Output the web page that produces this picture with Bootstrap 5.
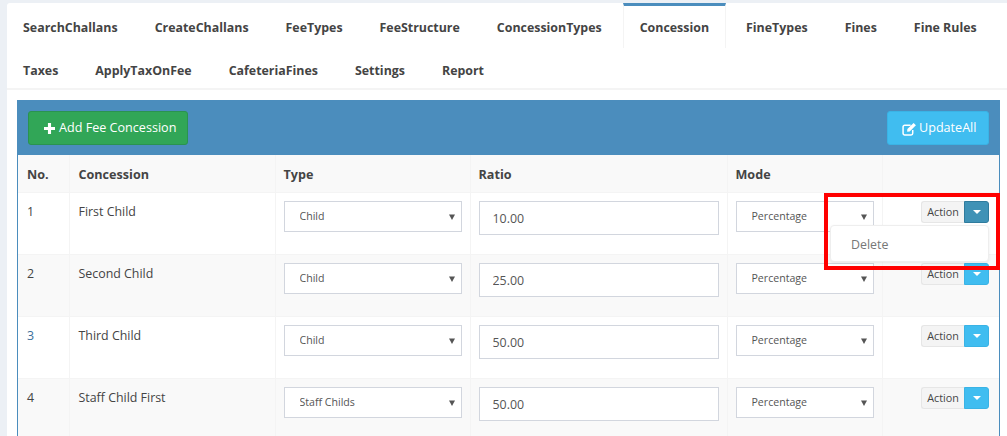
<!DOCTYPE html>
<html lang="en"><head><meta charset="utf-8"><title>Concession</title>
<link href="https://cdn.jsdelivr.net/npm/bootstrap@5.3.0/dist/css/bootstrap.min.css" rel="stylesheet">
<style>
html,body{height:436px;overflow:hidden}
body{background:#ecf0f5;font-family:"Open Sans","Noto Sans",sans-serif;font-size:13px;color:#333;padding:3px 0 0 7px;position:relative}
.tabbox{background:#fff;border-radius:3px 0 0 0;height:433px;padding-bottom:0;overflow:hidden}
.tabrow{display:flex;flex-wrap:wrap;height:87px;border-bottom:2px solid #f4f4f4;align-content:flex-start;margin:0;padding:0;list-style:none}
.tabrow li{height:43px}
.tabrow a{display:block;height:42px;padding:13px 16px 0;margin:3px 5px 0 0;font-weight:700;color:#444;text-decoration:none;font-size:12.4px;line-height:18px;white-space:nowrap}
.tabrow li.on a{height:45px;margin:0 4px 0 0;border-top:3px solid #4b8dbd;border-left:1px solid #f4f4f4;border-right:1px solid #f4f4f4;padding:13px 16px 0;background:#fff}
.tabrow li.second a{height:42px}
.panelbox{margin:10px 0 0 10px;width:983px;border:1px solid #4b8dbd;border-bottom:0;border-radius:4px 4px 0 0;position:relative;height:400px}
.panelhead{background:#4b8dbd;height:55px;padding:11px 11px 0 11px;display:flex;justify-content:space-between;align-items:flex-start;margin:-1px -1px 0}
.addbtn,.updbtn{height:34px;font-size:12.6px;border-radius:3px;color:#fff;display:flex;align-items:center;justify-content:flex-start;white-space:nowrap}
.addbtn{background:#31a657;border:1px solid #2a9350;width:160px;padding:1px 0 0 15px;gap:4px}
.updbtn{background:#40bdf0;border:1px solid #3ab3e5;width:102px;padding:1px 0 0 14px;gap:2px}
.addbtn:hover{background:#31a657;color:#fff}.updbtn:hover{background:#40bdf0;color:#fff}
.ctable{table-layout:fixed;width:981px;margin:0;border-collapse:collapse;font-size:12.4px;color:#444}
.ctable th,.ctable td{border:1px solid #f4f4f4;border-top:0;padding:8px 8px;vertical-align:top;background:transparent;box-shadow:none;color:#444}
.ctable tr>*:first-child{border-left:0;padding-left:9px}.ctable tr>*:last-child{border-right:0;padding-right:10px}
.ctable tr>*:nth-child(2){padding-left:9px}
.ctable td:nth-child(-n+2){padding-top:9px}
.ctable th{height:37px;font-weight:700;background:#f9f9f9;line-height:20px;font-size:12.6px;padding-top:10px;padding-bottom:7px}
.ctable td{height:62px;line-height:20px}
.ctable tr.alt td{background:#f9f9f9}
.numlink{color:#3c6f9c}
.selbox{height:31px;border:1px solid #d2d6de;border-radius:0;padding:0 22px 0 15px;font-size:10.6px;color:#555;background-color:#fff;background-image:url("data:image/svg+xml,%3Csvg xmlns='http://www.w3.org/2000/svg' width='6' height='6'%3E%3Cpath d='M0 .5h6L3 6z' fill='%23555'/%3E%3C/svg%3E");background-repeat:no-repeat;background-position:right 6px center;background-size:6px 6px;line-height:29px;box-shadow:none}
.ratebox{height:34px;border:1px solid #d2d6de;border-radius:0;padding:0 13px;font-size:12.4px;color:#555;box-shadow:none}
.actgroup{display:flex;justify-content:flex-end;margin-top:0;padding-right:0;height:22px}
.actmain{height:22px;width:43px;padding:0;background:#f4f4f4;border:1px solid #e6e6e6;border-right:0;border-radius:3px 0 0 3px;font-size:10.8px;line-height:18px;color:#444}
.actcaret{height:22px;width:25px;padding:0;background:#40bdf0;border:1px solid #3ab3e5;border-radius:0 3px 3px 0;display:flex;align-items:center;justify-content:center}
.actcaret.open{background:#3f92b6;border-color:#2f7b9d}
.actcaret i{width:0;height:0;border-left:4px solid transparent;border-right:4px solid transparent;border-top:4px solid #fff;display:block}
.actwrap{position:relative;padding-right:0}
.delmenu{display:block;position:absolute;top:24px;right:0;width:159px;height:37px;min-width:0;padding:0;border:1px solid #eee;border-radius:4px;background:#fff;box-shadow:0 1px 3px rgba(0,0,0,.08);z-index:5}
.delmenu a{display:block;padding:10px 20px 0;color:#777;font-size:12.4px;line-height:18px;text-decoration:none}
.redmark{position:absolute;left:824px;top:193px;width:176px;height:77px;border:4px solid #f00;pointer-events:none;z-index:9}
</style></head>
<body>
<div class="tabbox">
<ul class="tabrow">
<li><a href="#">SearchChallans</a></li><li><a href="#">CreateChallans</a></li><li><a href="#">FeeTypes</a></li><li><a href="#">FeeStructure</a></li><li><a href="#">ConcessionTypes</a></li><li class="on"><a href="#">Concession</a></li><li><a href="#">FineTypes</a></li><li><a href="#">Fines</a></li><li><a href="#">Fine Rules</a></li>
<li class="second"><a href="#">Taxes</a></li><li class="second"><a href="#">ApplyTaxOnFee</a></li><li class="second"><a href="#">CafeteriaFines</a></li><li class="second"><a href="#">Settings</a></li><li class="second"><a href="#">Report</a></li>
</ul>
<div class="panelbox">
<div class="panelhead">
<button class="btn addbtn" type="button"><svg width="11" height="11" viewBox="0 0 12 12"><path d="M4.300 0h3.400v4.300H12v3.400H7.700V12H4.300V7.700H0V4.300h4.300z" fill="#fff"/></svg>Add Fee Concession</button>
<button class="btn updbtn" type="button"><svg width="15" height="14" viewBox="0 0 14 13"><path d="M10 7.500V10.500a1.500 1.500 0 0 1-1.500 1.500H2.500A1.500 1.500 0 0 1 1 10.500V4.500A1.500 1.500 0 0 1 2.500 3H8" fill="none" stroke="#fff" stroke-width="1.400"/><path d="M5 6.500 10.800.8l2.200 2.200L7.200 8.800 4.800 9z" fill="#fff"/></svg>UpdateAll</button>
</div>
<table class="table ctable">
<colgroup><col style="width:51px"><col style="width:206px"><col style="width:195px"><col style="width:257px"><col style="width:155px"><col style="width:117px"></colgroup>
<thead><tr><th>No.</th><th>Concession</th><th>Type</th><th>Ratio</th><th>Mode</th><th></th></tr></thead>
<tbody>
<tr><td>1</td><td>First Child</td><td><select class="form-select selbox"><option>Child</option></select></td><td><input class="form-control ratebox" value="10.00"></td><td><select class="form-select selbox"><option>Percentage</option></select></td><td><div class="actwrap"><div class="actgroup"><button class="btn actmain" type="button">Action</button><button class="btn actcaret open" type="button" aria-label="Toggle"><i></i></button></div><div class="delmenu"><a href="#">Delete</a></div></div></td></tr>
<tr class="alt"><td>2</td><td>Second Child</td><td><select class="form-select selbox"><option>Child</option></select></td><td><input class="form-control ratebox" value="25.00"></td><td><select class="form-select selbox"><option>Percentage</option></select></td><td><div class="actgroup"><button class="btn actmain" type="button">Action</button><button class="btn actcaret" type="button" aria-label="Toggle"><i></i></button></div></td></tr>
<tr><td><span class="numlink">3</span></td><td>Third Child</td><td><select class="form-select selbox"><option>Child</option></select></td><td><input class="form-control ratebox" value="50.00"></td><td><select class="form-select selbox"><option>Percentage</option></select></td><td><div class="actgroup"><button class="btn actmain" type="button">Action</button><button class="btn actcaret" type="button" aria-label="Toggle"><i></i></button></div></td></tr>
<tr class="alt"><td>4</td><td>Staff Child First</td><td><select class="form-select selbox"><option>Staff Childs</option></select></td><td><input class="form-control ratebox" value="50.00"></td><td><select class="form-select selbox"><option>Percentage</option></select></td><td><div class="actgroup"><button class="btn actmain" type="button">Action</button><button class="btn actcaret" type="button" aria-label="Toggle"><i></i></button></div></td></tr>
</tbody></table>
</div>
</div>
<div class="redmark"></div>
<script src="https://cdn.jsdelivr.net/npm/bootstrap@5.3.0/dist/js/bootstrap.bundle.min.js"></script>
</body></html>
